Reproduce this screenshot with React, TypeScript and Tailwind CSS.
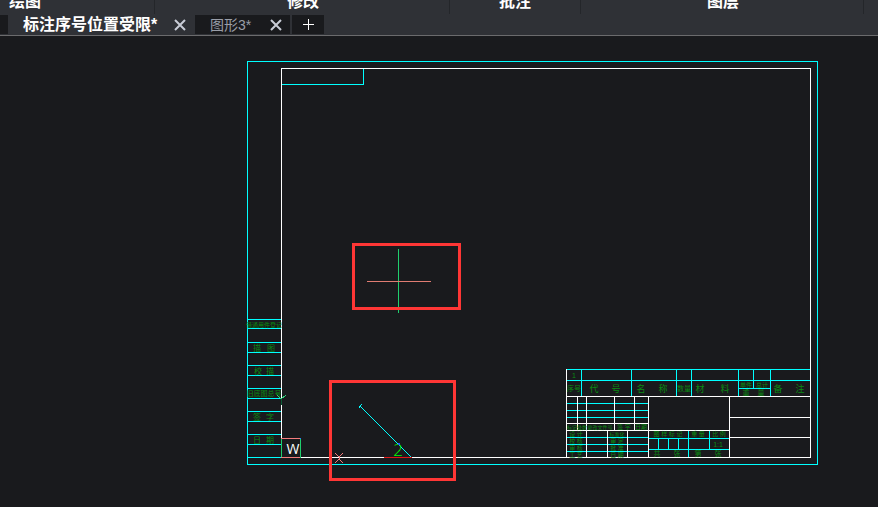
import { useState } from 'react';
import clsx from 'clsx';

type Segment = [number, number, number];
type Label = [number, number, string, number?];

const CYAN = '#00ffff';
const WHITE = '#ffffff';

const groups = [
  { name: '绘图', align: 'pl-[9px]' },
  { name: '修改', align: 'pl-[2px] text-center' },
  { name: '批注', align: 'text-center' },
  { name: '图层', align: 'pl-[2px] text-center' },
];

const tabs = [
  { id: 'limit', title: '标注序号位置受限*', width: 'min-w-[186px]' },
  { id: 'drawing3', title: '图形3*', width: 'min-w-[95px]' },
];

// Horizontal segments: from x, to x, y
const cyanRows: Segment[] = [
  [247, 817, 61],
  [247, 817, 464],
  [281, 363, 84],
  [247, 280, 319],
  [247, 280, 328],
  [247, 280, 342],
  [247, 280, 352],
  [247, 280, 365],
  [247, 280, 375],
  [247, 280, 388],
  [247, 280, 398],
  [247, 280, 411],
  [247, 280, 421],
  [247, 280, 434],
  [247, 280, 444],
  [247, 280, 457],
  [566, 809, 369],
  [566, 809, 380],
  [738, 770, 388],
  [567, 647, 403],
  [567, 647, 410],
  [567, 647, 417],
  [567, 647, 437],
  [567, 647, 444],
  [567, 647, 451],
  [649, 728, 438],
  [649, 728, 449],
];

// Vertical segments: from y, to y, x
const cyanCols: Segment[] = [
  [61, 464, 247],
  [61, 464, 817],
  [69, 84, 363],
  [369, 395, 581],
  [369, 395, 631],
  [369, 395, 676],
  [369, 395, 691],
  [369, 395, 738],
  [369, 388, 753],
  [369, 395, 770],
  [438, 449, 658],
  [438, 449, 668],
  [438, 449, 678],
  [430, 457, 688],
  [430, 449, 709],
];

const whiteRows: Segment[] = [
  [281, 810, 68],
  [300, 810, 457],
  [566, 810, 396],
  [729, 810, 417],
  [729, 810, 437],
  [566, 648, 423],
  [566, 729, 430],
];

const whiteCols: Segment[] = [
  [68, 398, 281],
  [405, 437, 281],
  [68, 457, 810],
  [369, 457, 566],
  [396, 430, 577],
  [396, 457, 586],
  [396, 430, 614],
  [396, 430, 634],
  [430, 457, 607],
  [430, 457, 627],
  [396, 457, 648],
  [396, 457, 729],
];

// Title block lettering: center x, baseline y, text, size
const labels: Label[] = [
  [264, 327, '借通用件登记'],
  [257, 351, '描', 8],
  [271, 351, '图', 8],
  [258, 374, '校', 8],
  [270, 374, '描', 8],
  [264, 396, '旧底图总号', 7],
  [257, 420, '签', 8],
  [270, 420, '字', 8],
  [257, 443, '日', 8],
  [270, 443, '期', 8],
  [574, 378, '1', 7],
  [574, 391, '序号', 7],
  [594, 392, '代', 9],
  [616, 392, '号', 9],
  [641, 392, '名', 9],
  [663, 392, '称', 9],
  [684, 391, '数量', 7],
  [700, 392, '材', 9],
  [725, 392, '料', 9],
  [746, 387, '单件'],
  [762, 387, '总计'],
  [746, 395, '重', 7],
  [761, 395, '量', 7],
  [778, 392, '备', 9],
  [800, 392, '注', 9],
  [572, 429, '标记', 5],
  [582, 429, '处数', 5],
  [600, 429, '更改文件号', 5],
  [624, 429, '签 字', 6],
  [641, 429, '日期', 6],
  [576, 436, '设 计'],
  [576, 443, '校 核'],
  [576, 450, '审 核'],
  [576, 457, '工 艺'],
  [617, 436, '标准化', 5],
  [617, 443, '审 定'],
  [617, 450, '批 准'],
  [617, 457, '日 期'],
  [668, 436, '图 样 标 记'],
  [698, 436, '重 量'],
  [719, 436, '比 例'],
  [718, 447, '1:1', 7],
  [657, 456, '共', 7],
  [677, 456, '张', 7],
  [698, 456, '第', 7],
  [718, 456, '张', 7],
];

const Rows = ({ items, color }: { items: Segment[]; color: string }) => (
  <g fill={color}>
    {items.map(([from, to, y]) => (
      <rect key={`${from}-${y}`} x={from} y={y} width={to - from + 1} height={1} />
    ))}
  </g>
);

const Cols = ({ items, color }: { items: Segment[]; color: string }) => (
  <g fill={color}>
    {items.map(([from, to, x]) => (
      <rect key={`${from}-${x}`} x={x} y={from} width={1} height={to - from + 1} />
    ))}
  </g>
);

const CloseIcon = () => (
  <svg viewBox="0 0 12 12" className="size-3" fill="none" stroke="currentColor" strokeWidth="2" aria-hidden="true">
    <path d="M1 1l10 10M11 1L1 11" />
  </svg>
);

const Drawing = () => (
  <svg
    viewBox="0 36 878 471"
    className="block w-full"
    shapeRendering="crispEdges"
    role="img"
    aria-label="Drawing sheet"
  >
    <Rows items={cyanRows} color={CYAN} />
    <Cols items={cyanCols} color={CYAN} />
    <Rows items={whiteRows} color={WHITE} />
    <Cols items={whiteCols} color={WHITE} />

    <g fill="#0a8a12" textAnchor="middle">
      {labels.map(([x, y, text, size]) => (
        <text key={`${x}-${y}`} x={x} y={y} fontSize={size ?? 6}>
          {text}
        </text>
      ))}
    </g>

    {/* UCS icon */}
    <path d="M277 395l4 4M286 395l-5 4" stroke="#2fd27a" fill="none" />
    <g fill="#1fce6d">
      <rect x="281" y="399" width="1" height="6" fill="#0b5a34" />
      <rect x="281" y="438" width="1" height="20" />
      <rect x="300" y="438" width="1" height="20" />
    </g>
    <g fill="#f47c7c">
      <rect x="281" y="438" width="19" height="1" />
      <rect x="281" y="457" width="19" height="1" />
    </g>
    <rect x="300" y="438" width="1" height="1" fill="#2a7fff" />
    <text x="293" y="454" fontSize="14" fill="#ffffff" textAnchor="middle" className="font-['Open_Sans']">
      W
    </text>

    {/* Leader with its balloon number */}
    <rect x="384" y="457" width="28" height="1" fill="#e01818" />
    <path d="M361 407L411 457" stroke={CYAN} fill="none" />
    <path d="M359 408l3-4" stroke={CYAN} fill="none" />
    <text x="398" y="456" fontSize="17" fill="#00ff00" textAnchor="middle" className="font-['Open_Sans'] font-light">
      2
    </text>
    <rect x="398" y="443" width="2" height="2" fill="#2a50ff" />
    <path d="M335 453l4 4v2l-4 4M343 453l-4 4M339 459l4 4" stroke="#f47c7c" fill="none" />

    {/* Crosshair cursor */}
    <rect x="398" y="249" width="1" height="64" fill="#1fce6d" />
    <rect x="367" y="281" width="64" height="1" fill="#e07c72" />

    <g fill="#ff3635" fillRule="evenodd">
      <path d="M352 243h109v67h-109zM355 246h103v61h-103z" />
      <path d="M329 380h127v101h-127zM332 383h121v95h-121z" />
    </g>
  </svg>
);

const App = () => {
  const [active, setActive] = useState('limit');

  return (
    <div className="min-h-screen bg-[#191a1d] font-['Liberation_Sans','Noto_Sans_CJK_SC',sans-serif] text-white">
      {/* Ribbon group titles */}
      <header className="grid h-3.5 grid-cols-[155fr_295fr_131fr_283fr_14fr] overflow-hidden bg-[#2f3136]">
        {groups.map((group) => (
          <div
            key={group.name}
            className={clsx('flex h-3.5 flex-col justify-end border-r border-[#24262a] pb-1', group.align)}
          >
            <span className="text-base leading-4 font-bold">{group.name}</span>
          </div>
        ))}
      </header>

      {/* Document tabs */}
      <nav className="flex h-[22px] items-stretch border-b border-[#6b6b6d] bg-[#2f3136] pt-px pb-px" aria-label="Drawings">
        <div className="w-2 bg-[#191a1d]" />
        {tabs.map((tab) => (
          <div
            key={tab.id}
            className={clsx(
              'mr-px flex items-center justify-between pr-2 pl-[15px]',
              tab.width,
              active === tab.id ? 'bg-[#2f3136]' : 'bg-[#191a1d]'
            )}
          >
            <button
              onClick={() => setActive(tab.id)}
              className={clsx(
                'whitespace-nowrap leading-5',
                active === tab.id ? 'text-base font-bold text-white' : 'text-sm text-[#9a9ea8]'
              )}
            >
              {tab.title}
            </button>
            <button className="text-[#c8ccd6]" aria-label={`Close ${tab.title}`}>
              <CloseIcon />
            </button>
          </div>
        ))}
        <button className="ml-px flex w-8 items-center justify-center bg-[#191a1d]" aria-label="New drawing">
          <svg viewBox="0 0 11 11" className="size-[11px]" shapeRendering="crispEdges" aria-hidden="true">
            <path d="M5 0h1v11h-1zM0 5h11v1h-11z" fill="#ffffff" />
          </svg>
        </button>
      </nav>

      <main>
        <Drawing />
      </main>
    </div>
  );
};

export default App;
